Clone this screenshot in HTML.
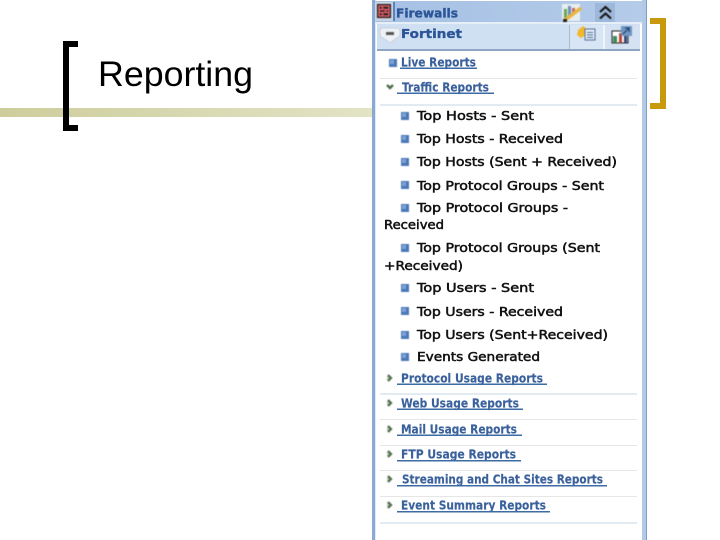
<!DOCTYPE html>
<html><head><meta charset="utf-8"><style>
html,body{margin:0;padding:0;background:#fff;width:720px;height:540px;overflow:hidden}
svg{display:block;position:absolute;left:0;top:0}
.t{font-family:"DejaVu Sans",sans-serif;font-size:12px;fill:#111;stroke:#111;stroke-width:.5;filter:blur(.3px)}
.l{font-family:"DejaVu Sans",sans-serif;font-size:12.5px;font-weight:bold;fill:#3a619c;stroke:#3a619c;stroke-width:.15;filter:blur(.35px)}
.h{font-family:"DejaVu Sans",sans-serif;font-size:12.500px;font-weight:bold;fill:#2c5597;stroke:#2c5597;stroke-width:.35;filter:blur(.35px)}
.ic{filter:blur(.4px)}
</style></head><body>
<svg width="720" height="540" viewBox="0 0 720 540" xmlns="http://www.w3.org/2000/svg">
<defs>
<linearGradient id="o" x1="0" x2="1" y1="0" y2="0"><stop offset="0" stop-color="#cdcd9c"/><stop offset="1" stop-color="#e3e3c6"/></linearGradient>
<linearGradient id="b" x1="0" x2="1" y1="0" y2="0"><stop offset="0" stop-color="#a6c1e4"/><stop offset="1" stop-color="#b4cbe9"/></linearGradient>
<g id="sq" class="ic"><rect width="8" height="8" fill="#4a78b8"/><rect x="1" y="1" width="4" height="4" fill="#7ea2d4"/></g>
<g id="ar" class="ic"><path d="M0 0l3 3-3 3" fill="none" stroke="#4f6b4a" stroke-width="2.200"/><path d="M-1 1.500l2 1.500-2 1.500" fill="none" stroke="#9aaa90" stroke-width="1"/></g>
</defs>

<rect x="0" y="108" width="372" height="9" fill="url(#o)"/>
<path d="M78 44H66V128H78" fill="none" stroke="#000" stroke-width="6"/>
<text x="98" y="86" font-family="Liberation Sans,sans-serif" font-size="35.500" fill="#000" textLength="155" lengthAdjust="spacingAndGlyphs">Reporting</text>
<path d="M650 21H663V106H650" fill="none" stroke="#c8990a" stroke-width="6"/>

<!-- panel -->
<rect x="372" y="0" width="3" height="540" fill="#8aaad4"/>
<rect x="375" y="0" width="1" height="540" fill="#dfe9f5"/>
<rect x="642" y="0" width="4" height="540" fill="#b3cae6"/>
<rect x="646" y="0" width="1" height="540" fill="#7f9dc6"/>
<rect x="375" y="1" width="267" height="21" fill="url(#b)"/>
<rect x="375" y="22" width="267" height="2" fill="#e6eef8"/>
<rect x="377" y="24" width="263" height="26" fill="#d0e0f3"/>
<rect x="377" y="49" width="263" height="2" fill="#8fa6c2"/>
<rect x="569" y="25" width="1" height="24" fill="#a9bcd4"/>
<rect x="570" y="25" width="33" height="24" fill="#d8e5f5"/>
<rect x="603" y="25" width="2" height="24" fill="#f0f5fb"/>
<rect x="605" y="25" width="35" height="24" fill="#d4e2f4"/>

<!-- firewall icon -->
<rect x="375" y="2" width="18" height="19" fill="#ccd3e0"/>
<g class="ic"><rect x="377" y="4" width="14" height="14" fill="#1c1c1c"/>
<path d="M379 6h10v10h-10zM379 9.500h10M379 12.500h10M382.500 6v3.500M385.500 9.500v3M382.500 12.500v3.500" fill="none" stroke="#e8606a" stroke-width="1.500"/></g>
<rect x="393" y="2" width="2" height="19" fill="#5a82bb"/>
<text x="396" y="17.500" class="h" textLength="62" lengthAdjust="spacingAndGlyphs">Firewalls</text>

<!-- fortinet icon -->
<g class="ic"><path d="M383 28h14q3 0 3 3v3q0 3-3 4l-7 5-7-5q-3-1-3-4v-3q0-3 3-3z" fill="#eef1f5" stroke="#c6d0dc"/>
<rect x="386" y="32" width="8" height="3" fill="#555"/></g>
<text x="401" y="38" class="h" textLength="61" lengthAdjust="spacingAndGlyphs">Fortinet</text>

<!-- header icons -->
<rect x="595" y="3" width="20" height="19" fill="#9db8da"/>
<g class="ic">
<path d="M600 12l5.500-5 5.500 5M600 18.500l5.500-5 5.500 5" fill="none" stroke="#111" stroke-width="2"/>
<rect x="562" y="4" width="18" height="17" fill="#e8edf0"/>
<rect x="564" y="9" width="3" height="9" fill="#6aa84f"/><rect x="568" y="6" width="3" height="10" fill="#6a8fc0"/><rect x="572" y="8" width="3" height="6" fill="#c86a50"/>
<path d="M565 20l16-12" stroke="#e8b640" stroke-width="3.500"/><rect x="563" y="19" width="4" height="3" fill="#222"/>

<path d="M578 30l5-4 4 3-1 6-5 3-4-3z" fill="#f2b82c"/>
<rect x="585" y="29" width="10" height="11" fill="#e4ecf6" stroke="#4f7098"/>
<path d="M587 32.500h6M587 35h6M587 37.500h6" stroke="#4f7098"/>

<rect x="612" y="31" width="16" height="12" fill="#fff" stroke="#222"/>
<rect x="613" y="36" width="4" height="7" fill="#3f8a5a"/><rect x="619" y="33" width="3" height="10" fill="#b8453a"/><rect x="624" y="35" width="3" height="8" fill="#2c4a78"/>
<rect x="621" y="26" width="11" height="10" fill="#6f96c4"/>
<path d="M623 34l6-6M625 28h4v4" fill="none" stroke="#1f3b63"/>
</g>

<!-- top links -->
<use href="#sq" x="389" y="59"/>
<text x="401" y="66.500" class="l" textLength="75" lengthAdjust="spacingAndGlyphs">Live Reports</text>
<rect x="400" y="67.500" width="77" height="1.500" fill="#3c6ba5"/>
<rect x="380" y="78" width="257" height="1" fill="#e6e6e6"/>
<path class="ic" d="M387 85l3 3 3-3" fill="none" stroke="#4f6b4a" stroke-width="2.400"/>
<text x="402" y="91.500" class="l" textLength="87" lengthAdjust="spacingAndGlyphs">Traffic Reports</text>
<rect x="397" y="92.500" width="97" height="1.500" fill="#3c6ba5"/>
<rect x="380" y="104" width="257" height="2" fill="#e3ebf2"/>

<!-- list -->
<use href="#sq" x="401" y="112"/><text x="417" y="120" class="t" textLength="117" lengthAdjust="spacingAndGlyphs">Top Hosts - Sent</text>
<use href="#sq" x="401" y="135"/><text x="417" y="143" class="t" textLength="146" lengthAdjust="spacingAndGlyphs">Top Hosts - Received</text>
<use href="#sq" x="401" y="158"/><text x="417" y="166" class="t" textLength="200" lengthAdjust="spacingAndGlyphs">Top Hosts (Sent + Received)</text>
<use href="#sq" x="401" y="181"/><text x="417" y="190" class="t" textLength="187" lengthAdjust="spacingAndGlyphs">Top Protocol Groups - Sent</text>
<use href="#sq" x="401" y="204"/><text x="417" y="212" class="t" textLength="151" lengthAdjust="spacingAndGlyphs">Top Protocol Groups -</text>
<text x="384" y="229" class="t" textLength="60" lengthAdjust="spacingAndGlyphs">Received</text>
<use href="#sq" x="401" y="244"/><text x="417" y="252" class="t" textLength="183" lengthAdjust="spacingAndGlyphs">Top Protocol Groups (Sent</text>
<text x="384" y="270" class="t" textLength="79" lengthAdjust="spacingAndGlyphs">+Received)</text>
<use href="#sq" x="401" y="284"/><text x="417" y="292" class="t" textLength="117" lengthAdjust="spacingAndGlyphs">Top Users - Sent</text>
<use href="#sq" x="401" y="307"/><text x="417" y="316" class="t" textLength="146" lengthAdjust="spacingAndGlyphs">Top Users - Received</text>
<use href="#sq" x="401" y="331"/><text x="417" y="339" class="t" textLength="191" lengthAdjust="spacingAndGlyphs">Top Users (Sent+Received)</text>
<use href="#sq" x="401" y="353"/><text x="417" y="361" class="t" textLength="123" lengthAdjust="spacingAndGlyphs">Events Generated</text>

<!-- bottom links -->
<use href="#ar" x="388" y="375"/>
<text x="401" y="382.500" class="l" textLength="142" lengthAdjust="spacingAndGlyphs">Protocol Usage Reports</text>
<rect x="397" y="383.500" width="150" height="1.500" fill="#3c6ba5"/>
<rect x="380" y="393" width="257" height="2" fill="#e3ebf2"/>

<use href="#ar" x="388" y="400"/>
<text x="401" y="407.500" class="l" textLength="118" lengthAdjust="spacingAndGlyphs">Web Usage Reports</text>
<rect x="397" y="408.500" width="126" height="1.500" fill="#3c6ba5"/>
<rect x="380" y="419" width="257" height="1" fill="#e6e6e6"/>

<use href="#ar" x="388" y="426"/>
<text x="401" y="433.500" class="l" textLength="116" lengthAdjust="spacingAndGlyphs">Mail Usage Reports</text>
<rect x="397" y="434.500" width="125" height="1.500" fill="#3c6ba5"/>
<rect x="380" y="445" width="257" height="1" fill="#e6e6e6"/>

<use href="#ar" x="388" y="451"/>
<text x="401" y="458.500" class="l" textLength="115" lengthAdjust="spacingAndGlyphs">FTP Usage Reports</text>
<rect x="397" y="460" width="124" height="1.500" fill="#3c6ba5"/>
<rect x="380" y="470" width="257" height="1" fill="#e6e6e6"/>

<use href="#ar" x="388" y="476"/>
<text x="402" y="483.500" class="l" textLength="201" lengthAdjust="spacingAndGlyphs">Streaming and Chat Sites Reports</text>
<rect x="397" y="485" width="210" height="1.500" fill="#3c6ba5"/>
<rect x="380" y="496" width="257" height="1" fill="#e6e6e6"/>

<use href="#ar" x="388" y="502"/>
<text x="401" y="509.500" class="l" textLength="145" lengthAdjust="spacingAndGlyphs">Event Summary Reports</text>
<rect x="397" y="511" width="153" height="1.500" fill="#3c6ba5"/>
<rect x="380" y="522" width="257" height="2" fill="#e3ebf2"/>
</svg>
</body></html>
